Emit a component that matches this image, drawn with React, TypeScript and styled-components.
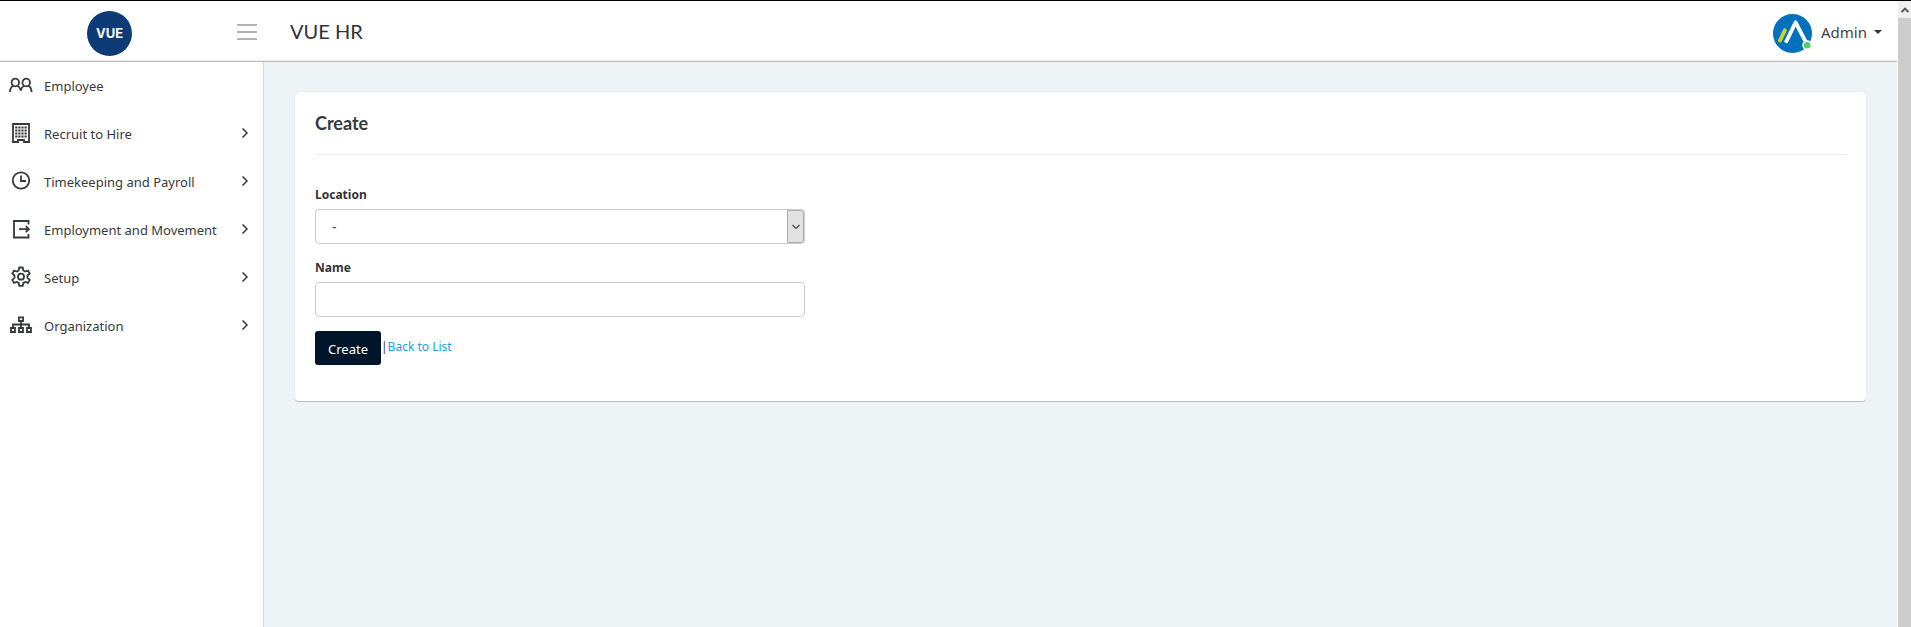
import React from "react";
import styled, { createGlobalStyle } from "styled-components";

const uiFont = '"Noto Sans", "Open Sans", sans-serif';
const headingFont = 'Lato, "Liberation Sans", sans-serif';

const GlobalStyle = createGlobalStyle`
  *, *::before, *::after { box-sizing: border-box; }
  body { margin: 0; background: #eef3f6; color: #373a3c; font: 12px/20px ${uiFont}; }
  button, input, select { font: inherit; }
`;

const Window = styled.div`
  display: flex;
  min-height: 100vh;
  border-top: 1px solid #000;
`;

const Page = styled.div`
  flex: 1;
  min-width: 0;
  display: flex;
  flex-direction: column;
`;

const Header = styled.header`
  display: flex;
  align-items: center;
  height: 61px;
  background: #fff;
  border-bottom: 1px solid #bcbfc2;
  box-shadow: inset 0 -1px 0 #ececec;
`;

const Brand = styled.div`
  width: 264px;
  display: flex;
  align-items: center;
  justify-content: space-between;
  padding: 4px 7px 0 87px;
`;

const LogoLink = styled.a`
  display: flex;
  border-radius: 50%;
`;

const MenuButton = styled.button`
  display: flex;
  padding: 0 0 2px;
  border: 0;
  background: none;
  cursor: pointer;
`;

const AppTitle = styled.h1`
  flex: 1;
  margin: 0;
  padding: 0 0 0 26px;
  font: 400 20px/24px ${headingFont};
  color: #333;
`;

const UserButton = styled.button`
  display: flex;
  align-items: center;
  gap: 9px;
  margin-right: 15px;
  padding: 5px 0 0;
  border: 0;
  background: none;
  color: #444;
  font-size: 15px;
  line-height: 20px;
  cursor: pointer;
`;

const UserName = styled.span`
  display: flex;
  align-items: center;
  gap: 7px;
  padding-bottom: 3px;
`;

const Body = styled.div`
  flex: 1;
  display: flex;
`;

const Sidebar = styled.nav`
  width: 264px;
  background: #fff;
  border-right: 1px solid #d5d8db;
`;

const MenuList = styled.ul`
  margin: 0;
  padding: 0;
  list-style: none;
`;

const MenuLink = styled.a`
  display: flex;
  align-items: center;
  gap: 11px;
  height: 48px;
  padding: 0 14px 0 9px;
  color: #373a3c;
  font-size: 13px;
  text-decoration: none;
`;

const MenuLabel = styled.span`
  flex: 1;
  white-space: nowrap;
`;

const Main = styled.main`
  flex: 1;
  min-width: 0;
  padding: 30px 31px;
`;

const Card = styled.section`
  padding: 20px 20px 36px;
  background: #fff;
  border-radius: 4px;
  border-bottom: 1px solid #bfc1c3;
  box-shadow: 0 0 1px rgba(0, 0, 0, 0.2);
`;

const CardTitle = styled.h2`
  margin: 0 0 30px;
  padding-bottom: 20px;
  border-bottom: 1px solid #ececec;
  font: 700 18px/22px ${headingFont};
  color: #373a3c;
`;

const Form = styled.form`
  display: flex;
  flex-direction: column;
  gap: 14px;
`;

const Field = styled.div`
  width: calc(100% / 3 - 20px);
`;

const Label = styled.label`
  display: block;
  margin-bottom: 4px;
  font-weight: 700;
  color: #333;
`;

const control = `
  display: block;
  width: 100%;
  height: 35px;
  padding: 0 16px;
  border: 1px solid #ccc;
  border-radius: 4px;
  background: #fff;
  color: #444;
  outline: none;
`;

const TextInput = styled.input`${control}`;

const SelectWrap = styled.div`
  position: relative;
`;

const Select = styled.select`
  ${control}
  appearance: none;
  font-size: 14px;
`;

const SelectArrow = styled.span`
  position: absolute;
  top: 1px;
  right: 1px;
  bottom: 1px;
  width: 17px;
  display: flex;
  align-items: center;
  justify-content: center;
  border: 1px solid #adadad;
  border-radius: 0 3px 3px 0;
  background: #e1e1e1;
  pointer-events: none;
`;

const Actions = styled.div`
  display: flex;
  align-items: flex-start;
  line-height: 32px;
`;

const SubmitButton = styled.button`
  height: 34px;
  padding: 2px 13px 0;
  border: 0;
  border-radius: 3px;
  background: #001529;
  color: #fff;
  font-size: 13px;
  cursor: pointer;
`;

const BackLink = styled.a`
  color: #1a9fe6;
  text-decoration: none;
`;

const Scrollbar = styled.div`
  width: 14px;
  border-left: 1px solid #fff;
  background: #cdcdcd;
`;

const ScrollUp = styled.div`
  display: flex;
  align-items: center;
  justify-content: center;
  height: 17px;
  background: #f0f0f0;
`;

const Logo = () => (
  <svg width="45" height="45" viewBox="0 0 45 45" role="img" aria-label="VUE">
    <circle cx="22.5" cy="22.5" r="22.5" fill="#0d3b75" />
    <text
      x="22.5"
      y="27"
      fill="#fff"
      textAnchor="middle"
      fontFamily="Inter, sans-serif"
      fontSize="13"
      fontWeight="700"
    >
      VUE
    </text>
  </svg>
);

const Avatar = () => (
  <svg width="39" height="39" viewBox="0 0 40 40" aria-hidden="true">
    <circle cx="20" cy="20" r="20" fill="#0071bc" />
    <path d="M7.2 27.2 12.2 16.8" stroke="#c1d72e" strokeWidth="4" strokeLinecap="round" />
    <path d="M13 29.5 23.2 8.6 33.6 28.5" fill="none" stroke="#fff" strokeWidth="4" strokeLinejoin="round" />
    <circle cx="35" cy="32" r="5" fill="#fff" />
    <circle cx="35" cy="32" r="3.4" fill="#4fcf68" />
  </svg>
);

const ICONS = {
  people: (
    <>
      <circle cx="6.3" cy="9.5" r="3.8" />
      <circle cx="17.2" cy="9.5" r="3.8" />
      <path d="M.9 19c.2-3.5 1.6-5.3 3.4-6.2M8.4 12.8c1.8.9 3 2.5 3.4 4.7.4-2.2 1.6-3.8 3.4-4.7M19.3 12.8c1.8.9 3.1 2.7 3.3 6.2" />
    </>
  ),
  building: (
    <>
      <path d="M4 3h16v18h-5v-2H9v2H4z" />
      <path d="M6.2 6.5h12M6.2 9.5h12M6.2 12.5h12M6.2 15.5h12" strokeDasharray="2.2 .9" />
    </>
  ),
  clock: (
    <>
      <circle cx="12" cy="11.5" r="8.2" />
      <path d="M12 6.5V12h5" />
    </>
  ),
  exit: (
    <>
      <path d="M19.5 7.5V4H5v16.5h14.5V17" />
      <path d="M10 12.2h9.5M16.8 9.2l3 3-3 3" />
    </>
  ),
  gear: (
    <>
      <circle cx="12" cy="11.7" r="3" />
      <path d="M10.3 2.5h3.4l.6 3 1.9 1 2.8-1 1.7 3-2.2 2v2.4l2.2 2-1.7 3-2.8-1-1.9 1-.6 3h-3.4l-.6-3-1.9-1-2.8 1-1.7-3 2.2-2v-2.4l-2.2-2 1.7-3 2.8 1 1.9-1z" />
    </>
  ),
  tree: (
    <>
      <path d="M9.9 4.4h4.2V8H9.9zM2 15h4v4H2zM10 15h4v4h-4zM18 15h4v4h-4z" />
      <path d="M12 8.2v6.5M4 14.7v-3.2h16v3.2" />
    </>
  ),
};

type IconName = keyof typeof ICONS;

const MenuIcon = ({ name }: { name: IconName }) => (
  <svg width="24" height="24" viewBox="0 1 24 24" fill="none" stroke="#373a3c" strokeWidth="1.8" aria-hidden="true">
    {ICONS[name]}
  </svg>
);

const Chevron = () => (
  <svg width="8" height="14" viewBox="0 0 8 14" fill="none" stroke="#373a3c" strokeWidth="1.5" aria-hidden="true">
    <path d="M1.5 1.5 6 6 1.5 10.5" />
  </svg>
);

const MENU: { icon: IconName; label: string; expandable: boolean }[] = [
  { icon: "people", label: "Employee", expandable: false },
  { icon: "building", label: "Recruit to Hire", expandable: true },
  { icon: "clock", label: "Timekeeping and Payroll", expandable: true },
  { icon: "exit", label: "Employment and Movement", expandable: true },
  { icon: "gear", label: "Setup", expandable: true },
  { icon: "tree", label: "Organization", expandable: true },
];

export default function App() {
  return (
    <>
      <GlobalStyle />
      <Window>
        <Page>
          <Header>
            <Brand>
              <LogoLink href="#"><Logo /></LogoLink>
              <MenuButton type="button" aria-label="Toggle menu">
                <svg width="20" height="16" viewBox="0 0 20 16" stroke="#999" strokeWidth="1.5" aria-hidden="true">
                  <path d="M0 1h20M0 8h20M0 15h20" />
                </svg>
              </MenuButton>
            </Brand>
            <AppTitle>VUE HR</AppTitle>
            <UserButton type="button">
              <Avatar />
              <UserName>
                Admin
                <svg width="8" height="4" viewBox="0 0 8 4" aria-hidden="true">
                  <path d="M0 0h8L4 4z" fill="#333" />
                </svg>
              </UserName>
            </UserButton>
          </Header>
          <Body>
            <Sidebar aria-label="Main menu">
              <MenuList>
                {MENU.map((item) => (
                  <li key={item.label}>
                    <MenuLink href="#">
                      <MenuIcon name={item.icon} />
                      <MenuLabel>{item.label}</MenuLabel>
                      {item.expandable && <Chevron />}
                    </MenuLink>
                  </li>
                ))}
              </MenuList>
            </Sidebar>
            <Main>
              <Card>
                <CardTitle>Create</CardTitle>
                <Form onSubmit={(event) => event.preventDefault()}>
                  <Field>
                    <Label htmlFor="location">Location</Label>
                    <SelectWrap>
                      <Select id="location" defaultValue="">
                        <option value="">-</option>
                      </Select>
                      <SelectArrow>
                        <svg width="8" height="6" viewBox="0 0 8 6" fill="none" stroke="#444" strokeWidth="1.2" aria-hidden="true">
                          <path d="M.5 1 4 4.5 7.5 1" />
                        </svg>
                      </SelectArrow>
                    </SelectWrap>
                  </Field>
                  <Field>
                    <Label htmlFor="name">Name</Label>
                    <TextInput id="name" type="text" />
                  </Field>
                  <Actions>
                    <SubmitButton type="submit">Create</SubmitButton>
                    <span>|</span>
                    <BackLink href="#">Back to List</BackLink>
                  </Actions>
                </Form>
              </Card>
            </Main>
          </Body>
        </Page>
        <Scrollbar aria-hidden="true">
          <ScrollUp>
            <svg width="8" height="6" viewBox="0 0 8 6" fill="none" stroke="#505050" strokeWidth="1.8">
              <path d="M.5 5 4 1.5 7.5 5" />
            </svg>
          </ScrollUp>
        </Scrollbar>
      </Window>
    </>
  );
}
